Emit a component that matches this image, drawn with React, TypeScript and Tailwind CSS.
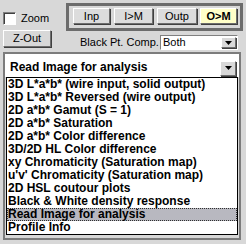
import React from "react";

const items = [
  "3D L*a*b* (wire input, solid output)",
  "3D L*a*b* Reversed (wire output)",
  "2D a*b* Gamut (S = 1)",
  "2D a*b* Saturation",
  "2D a*b* Color difference",
  "3D/2D HL Color difference",
  "xy Chromaticity (Saturation map)",
  "u'v' Chromaticity (Saturation map)",
  "2D HSL coutour plots",
  "Black & White density response",
  "Read Image for analysis",
  "Profile Info",
];

const raised =
  "border border-t-white border-l-white border-r-[#6e6e6e] border-b-[#6e6e6e] shadow-[1px_1px_0_#404040]";

const Arrow: React.FC<{ className?: string }> = ({ className }) => (
  <div className={`flex items-center justify-center bg-[#d8d8d8] ${raised} ${className ?? ""}`}>
    <svg width="7" height="4" viewBox="0 0 7 4">
      <polygon points="0,0 7,0 3.5,4" fill="#000" />
    </svg>
  </div>
);

export default function App() {
  const selected = "Read Image for analysis";

  return (
    <div className="w-[246px] h-[244px] overflow-hidden bg-[#d8d8d8] text-black font-['Liberation_Sans',Arial,sans-serif]">
      <div className="flex pt-[3px]">
        {/* left: zoom + z-out */}
        <div className="ml-[3px] w-[48px]">
          <label className="mt-[9px] flex items-center h-[13px]">
            <span className="w-[13px] h-[13px] bg-white border border-t-[#808080] border-l-[#808080] border-r-white border-b-white shadow-[inset_1px_1px_0_#404040]" />
            <span className="ml-[5px] text-[11px] leading-[13px]">Zoom</span>
          </label>
          <button className={`mt-[4px] w-[48px] h-[17px] bg-[#d8d8d8] text-[11px] leading-[14px] ${raised}`}>
            Z-Out
          </button>
        </div>

        {/* right: mode buttons + black point */}
        <div className="ml-[15px]">
          <div className="w-[177px] h-[28px] border-[3px] border-[#6c6c6c] pt-[2px] pl-[4px] flex">
            <button className={`w-[37px] h-[16px] bg-[#dcdcdc] text-[11px] leading-[13px] ${raised}`}>Inp</button>
            <button className={`ml-[4px] w-[39px] h-[16px] bg-[#dcdcdc] text-[11px] leading-[13px] ${raised}`}>I&gt;M</button>
            <button className={`ml-[4px] w-[40px] h-[16px] bg-[#dcdcdc] text-[11px] leading-[13px] ${raised}`}>Outp</button>
            <button className={`ml-[3px] w-[37px] h-[16px] bg-[#ffffc8] text-[11px] font-bold leading-[13px] ${raised}`}>O&gt;M</button>
          </div>
          <div className="mt-[4px] flex items-center h-[15px]">
            <span className="pl-[14px] text-[11px] leading-[13px]">Black Pt. Comp.</span>
            <div className="ml-auto mr-[5px] w-[78px] h-[15px] bg-white border border-t-[#808080] border-l-[#808080] border-r-white border-b-white flex items-center">
              <span className="pl-[2px] text-[11px] leading-[13px] flex-1">Both</span>
              <Arrow className="w-[15px] h-[11px] mr-[1px]" />
            </div>
          </div>
        </div>
      </div>

      {/* plot type selector with open list */}
      <div className="mt-[2px] ml-[3px] w-[238px] h-[188px] border-2 border-[#7c7c7c]">
        <div className="h-[23px] bg-white flex items-center pl-[5px] pr-[3px]">
          <span className="flex-1 text-[12px] font-bold leading-[14px] pt-[2px]">{selected}</span>
          <Arrow className="w-[16px] h-[15px] mt-[5px]" />
        </div>
        <div className="ml-[1px] w-[232px] bg-white border border-black">
          {items.map((it) => (
            <div
              key={it}
              className={`h-[13px] pl-[1px] text-[12px] font-bold leading-[13px] whitespace-nowrap ${
                it === selected ? "bg-[#b8b8c0] outline outline-dotted outline-[#303030] -outline-offset-1" : ""
              }`}
            >
              {it}
            </div>
          ))}
        </div>
      </div>
    </div>
  );
}
